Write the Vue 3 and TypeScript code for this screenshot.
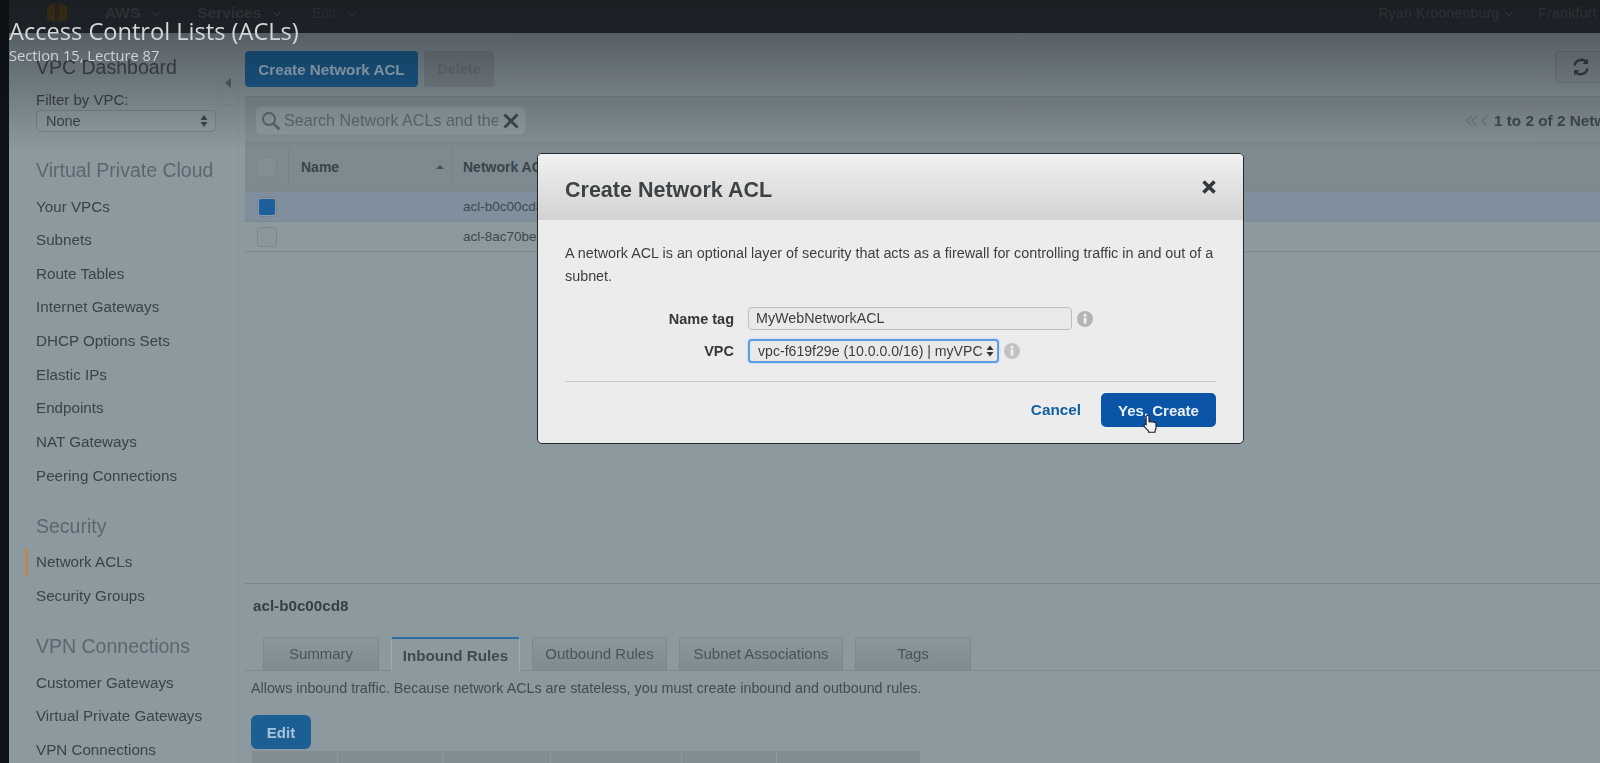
<script setup lang="ts">
const vpcItems: string[] = ['Your VPCs', 'Subnets', 'Route Tables', 'Internet Gateways', 'DHCP Options Sets', 'Elastic IPs', 'Endpoints', 'NAT Gateways', 'Peering Connections']
const vpnItems: string[] = ['Customer Gateways', 'Virtual Private Gateways', 'VPN Connections']
const tabs = [
  { label: 'Summary', width: 116, active: false },
  { label: 'Inbound Rules', width: 129, active: true },
  { label: 'Outbound Rules', width: 135, active: false },
  { label: 'Subnet Associations', width: 164, active: false },
  { label: 'Tags', width: 116, active: false },
]
const ruleCols: number[] = [85, 104, 107, 130, 94, 143]
</script>

<template>
  <div class="stage">
    <div class="strip"></div>
    <div class="page">
      <header class="topbar">
        <svg class="logo" width="22" height="21" viewBox="0 0 22 21"><path d="M1 4l8-3v19l-8-3zM21 4l-8-3v19l8-3z" fill="#5e4115"/><path d="M10 1h2v19h-2z" fill="#4a3412"/></svg>
        <span class="top-item aws">AWS<i class="caret"></i></span>
        <span class="top-item services">Services<i class="caret"></i></span>
        <span class="top-item edit">Edit<i class="caret"></i></span>
        <span class="top-user">Ryan Kroonenburg<i class="caret"></i></span>
        <span class="top-region">Frankfurt</span>
      </header>

      <div class="body">
        <aside class="sidebar">
          <div class="dash">VPC Dashboard</div>
          <div class="filter">Filter by VPC:</div>
          <div class="side-select">
            <span>None</span>
            <svg width="8" height="14" viewBox="0 0 8 14"><path d="M4 1l3.500 5h-7zM4 13l3.500-5h-7z" fill="#3d464b"/></svg>
          </div>
          <div class="group first">Virtual Private Cloud</div>
          <div v-for="item in vpcItems" :key="item" class="nav">{{ item }}</div>
          <div class="group">Security</div>
          <div class="nav active">Network ACLs</div>
          <div class="nav">Security Groups</div>
          <div class="group">VPN Connections</div>
          <div v-for="item in vpnItems" :key="item" class="nav">{{ item }}</div>
          <div class="collapse"><i></i></div>
        </aside>

        <main class="main">
          <div class="toolbar">
            <button class="btn primary">Create Network ACL</button>
            <button class="btn ghost">Delete</button>
            <div class="refresh">
              <svg width="20" height="20" viewBox="0 0 20 20" fill="none" stroke="#394247" stroke-width="2.4"><path d="M3.500 8.500A7 7 0 0 1 15.500 5"/><path d="M16.500 11.500A7 7 0 0 1 4.500 15"/><path d="M17 1.500v5.500h-5.500z" fill="#394247" stroke="none"/><path d="M3 18.500v-5.500h5.500z" fill="#394247" stroke="none"/></svg>
            </div>
          </div>

          <div class="searchbar">
            <div class="search">
              <svg width="20" height="20" viewBox="0 0 20 20" fill="none" stroke="#5d686e" stroke-width="2"><circle cx="8" cy="8" r="6"/><path d="M12.500 12.500l6 6" stroke-width="3"/></svg>
              <span class="search-text">Search Network ACLs and their associated subnets</span>
              <svg class="clear" width="16" height="16" viewBox="0 0 16 16" stroke="#3f484d" stroke-width="3"><path d="M1.500 1.500l13 13M14.500 1.500l-13 13"/></svg>
            </div>
            <div class="pager">
              <svg class="pager-arrows" width="24" height="14" viewBox="0 0 24 14" fill="none" stroke="#6f7a80" stroke-width="1.300"><path d="M6 2L1 7l5 5M11 2L6 7l5 5M21 2l-5 5 5 5"/></svg>
              <span>1 to 2 of 2 Network ACLs</span>
            </div>
          </div>

          <div class="thead">
            <div class="cell-check"><span class="check head"></span></div>
            <div class="cell-name">Name<i class="sort"></i></div>
            <div class="cell-id">Network ACL ID</div>
          </div>
          <div class="trow selected">
            <div class="cell-check"><span class="check on"></span></div>
            <div class="cell-name"></div>
            <div class="cell-id plain">acl-b0c00cd8</div>
          </div>
          <div class="trow">
            <div class="cell-check"><span class="check"></span></div>
            <div class="cell-name"></div>
            <div class="cell-id plain">acl-8ac70be3</div>
          </div>

          <div class="spacer"></div>

          <section class="detail">
            <div class="detail-id">acl-b0c00cd8</div>
            <div class="tabs">
              <div
                v-for="tab in tabs"
                :key="tab.label"
                class="tab"
                :class="{ on: tab.active }"
                :style="{ width: tab.width + 'px' }"
              >{{ tab.label }}</div>
            </div>
            <p class="note">Allows inbound traffic. Because network ACLs are stateless, you must create inbound and outbound rules.</p>
            <button class="btn primary edit-btn">Edit</button>
            <div class="rules">
              <span v-for="(w, i) in ruleCols" :key="i" :style="{ width: w + 'px' }"></span>
            </div>
          </section>
        </main>
      </div>
    </div>

    <div class="scrim"></div>
    <div class="player">
      <div class="player-title">Access Control Lists (ACLs)</div>
      <div class="player-sub">Section 15, Lecture 87</div>
    </div>

    <div class="modal">
      <div class="modal-head">
        <h2>Create Network ACL</h2>
        <svg width="14" height="14" viewBox="0 0 14 14" stroke="#33383c" stroke-width="3.600"><path d="M1.500 1.500l11 11M12.500 1.500l-11 11"/></svg>
      </div>
      <div class="modal-body">
        <p class="intro">A network ACL is an optional layer of security that acts as a firewall for controlling traffic in and out of a subnet.</p>
        <div class="form-row one">
          <label>Name tag</label>
          <div class="field">MyWebNetworkACL</div>
          <svg class="info" width="16" height="16" viewBox="0 0 16 16"><circle cx="8" cy="8" r="8" fill="#b4b4b4"/><rect x="6.800" y="6.600" width="2.600" height="6" fill="#f2f2f2"/><circle cx="8" cy="4.200" r="1.500" fill="#f2f2f2"/></svg>
        </div>
        <div class="form-row two">
          <label>VPC</label>
          <div class="field focus">
            <span>vpc-f619f29e (10.0.0.0/16) | myVPC</span>
            <svg width="8" height="12" viewBox="0 0 8 12"><path d="M4 .5l3.500 4.500h-7zM4 11.500l3.500-4.500h-7z" fill="#333"/></svg>
          </div>
          <svg class="info" width="16" height="16" viewBox="0 0 16 16"><circle cx="8" cy="8" r="8" fill="#c2c2c2"/><rect x="6.800" y="6.600" width="2.600" height="6" fill="#f2f2f2"/><circle cx="8" cy="4.200" r="1.500" fill="#f2f2f2"/></svg>
        </div>
        <div class="modal-foot">
          <span class="cancel">Cancel</span>
          <button class="yes">Yes, Create</button>
        </div>
      </div>
    </div>

    <svg class="hand" width="15" height="20" viewBox="0 0 15 20"><path d="M4.500 1.200c1 0 1.500.7 1.500 1.600v5l1 .1c.3-.6 1.700-.7 2.100.1.400-.5 1.700-.4 2 .4.600-.3 1.900 0 1.900 1.100v4.200c0 1.500-.5 2.300-1 3.100v1.400H5.500v-1.200C4.500 16 1 12.800 1 11.200c0-1 1.200-1.400 2.100-.7V2.800c0-.9.500-1.600 1.400-1.600z" fill="#f2f2f2" stroke="#1e1e1e" stroke-width="1.100"/></svg>
  </div>
</template>

<style>
html, body { margin: 0; background: #0f1317; }
</style>

<style scoped>
.stage {
  position: relative;
  width: 1600px;
  height: 763px;
  overflow: hidden;
  display: flex;
  background: #0f1317;
  font-family: "Liberation Sans", Arial, sans-serif;
}
.strip { width: 9px; flex: none; background: #0f1317; }
.page { flex: 1; min-width: 0; display: flex; flex-direction: column; filter: blur(0.5px); }

.topbar {
  height: 33px;
  flex: none;
  background: #2a3036;
  display: flex;
  align-items: flex-start;
  color: #4b5157;
  font-size: 15px;
  white-space: nowrap;
}
.logo { margin: 2px 0 0 37px; }
.top-item { font-weight: 700; line-height: 26px; font-size: 15.500px; }
.aws { margin-left: 37px; }
.services { margin-left: 38px; }
.edit { margin-left: 32px; font-weight: 400; font-size: 14px; color: #41474d; }
.top-user { margin-left: auto; line-height: 26px; font-size: 14px; letter-spacing: .2px; }
.top-user .caret { margin-left: 7px; }
.top-region { margin-left: 26px; margin-right: 3px; line-height: 26px; font-size: 14px; letter-spacing: .3px; }
.caret {
  display: inline-block;
  width: 5px;
  height: 5px;
  border-right: 1.500px solid currentColor;
  border-bottom: 1.500px solid currentColor;
  transform: rotate(45deg);
  margin: 0 0 3px 13px;
}

.body { flex: 1; min-height: 0; display: flex; background: #8c999f; }

.sidebar {
  position: relative;
  width: 229px;
  flex: none;
  box-sizing: border-box;
  padding: 20px 0 0 27px;
  color: #39434a;
  white-space: nowrap;
}
.dash { height: 28px; line-height: 28px; font-size: 19.500px; color: #414b52; }
.filter { margin-top: 10px; height: 18px; line-height: 18px; font-size: 15px; }
.side-select {
  margin-top: 1px;
  width: 180px;
  height: 22px;
  box-sizing: border-box;
  border: 1px solid #79858b;
  border-radius: 5px;
  background: #8f9ca2;
  display: flex;
  align-items: center;
  justify-content: space-between;
  padding: 0 7px 0 9px;
  font-size: 14.500px;
}
.group {
  margin-top: 19.500px;
  margin-bottom: 5.500px;
  height: 28px;
  line-height: 28px;
  font-size: 19.500px;
  color: #5b676e;
}
.group.first { margin-top: 24px; }
.nav { position: relative; height: 33.670px; line-height: 33.670px; font-size: 15.200px; }
.nav.active::before {
  content: "";
  position: absolute;
  left: -11px;
  top: 3px;
  width: 3px;
  height: 28px;
  background: #b88a4d;
}
.collapse {
  position: absolute;
  top: 27px;
  right: 0;
  width: 21px;
  height: 45px;
  box-sizing: border-box;
  border-left: 1px solid #87949a;
  border-top: 1px solid #85929a;
  border-bottom: 1px solid #85929a;
  display: flex;
  align-items: center;
  justify-content: center;
}
.collapse i {
  width: 0;
  height: 0;
  border-top: 5px solid transparent;
  border-bottom: 5px solid transparent;
  border-right: 6px solid #5a656b;
}

.main {
  flex: 1;
  min-width: 0;
  display: flex;
  flex-direction: column;
  border-left: 1px solid #87949a;
  padding-left: 6px;
}
.toolbar {
  height: 64px;
  flex: none;
  box-sizing: border-box;
  padding-top: 18px;
  display: flex;
  align-items: flex-start;
  gap: 6px;
  border-bottom: 1px solid #7a868c;
}
.btn {
  font-family: inherit;
  font-weight: 700;
  font-size: 15.200px;
  border: 0;
  padding: 0;
  border-radius: 4px;
  height: 36px;
}
.primary { width: 173px; background: #1b5f94; color: #a9c2d6; }
.ghost { width: 70px; background: #7f8a90; color: #6f7a80; font-size: 14.500px; }
.refresh {
  margin-left: auto;
  width: 60px;
  height: 32px;
  margin-right: -15px;
  box-sizing: border-box;
  border: 1px solid #79848a;
  border-radius: 4px;
  background: #88939a;
  display: flex;
  align-items: center;
  padding-left: 15px;
}

.searchbar {
  height: 46px;
  flex: none;
  box-sizing: border-box;
  border-bottom: 1px solid #79858b;
  background: #838f95;
  display: flex;
  align-items: flex-start;
  padding: 9px 0 0 10px;
  white-space: nowrap;
}
.search {
  width: 271px;
  height: 29px;
  box-sizing: border-box;
  border-radius: 6px;
  background: #8f9ca2;
  border: 1px solid #86929a;
  display: flex;
  align-items: center;
  padding-left: 5px;
  gap: 3px;
}
.search-text {
  width: 214px;
  flex: none;
  overflow: hidden;
  font-size: 16.100px;
  color: #5f6a70;
}
.clear { margin-left: 2px; }
.pager {
  margin-left: auto;
  width: 134px;
  overflow: hidden;
  flex: none;
  font-weight: 700;
  font-size: 15.300px;
  line-height: 30px;
  color: #3f494f;
  display: flex;
  align-items: center;
  gap: 4px;
}
.pager-arrows { flex: none; }

.thead, .trow { display: flex; flex: none; border-bottom: 1px solid #7b878d; white-space: nowrap; }
.thead { height: 49px; background: #7e8a90; box-sizing: border-box; align-items: center; color: #3a444a; font-size: 14px; font-weight: 700; }
.trow { height: 30px; box-sizing: border-box; align-items: center; font-size: 13.500px; color: #3e484e; background: #8c999d; }
.trow.selected { background: #808f9e; }
.cell-check { width: 44px; height: 100%; display: flex; align-items: center; padding-left: 12px; box-sizing: border-box; }
.thead .cell-check { border-right: 1px solid #768288; height: 38px; }
.cell-name { width: 163px; box-sizing: border-box; padding-left: 12px; display: flex; align-items: center; justify-content: space-between; padding-right: 7px; }
.thead .cell-name { height: 38px; border-right: 1px solid #768288; }
.cell-id { padding-left: 11px; }
.plain { font-weight: 400; }
.sort {
  width: 0;
  height: 0;
  border-left: 4px solid transparent;
  border-right: 4px solid transparent;
  border-bottom: 4px solid #465056;
}
.check { width: 20px; height: 20px; box-sizing: border-box; display: block; border: 1px solid #7b878d; border-radius: 4px; background: #8b979d; }
.check.head { background: #828e94; }
.check.on { background: #1c5f9a; border: 2px solid #8c9aa8; outline: 1px solid #76838f; outline-offset: -1px; }

.spacer { flex: 1; }

.detail {
  flex: none;
  height: 180px;
  box-sizing: border-box;
  border-top: 1px solid #7a868c;
  display: flex;
  flex-direction: column;
  white-space: nowrap;
  overflow: hidden;
}
.detail-id { margin: 12px 0 0 8px; height: 20px; line-height: 20px; font-size: 15.200px; font-weight: 700; color: #363f45; }
.tabs {
  margin-top: 21px;
  height: 34px;
  flex: none;
  box-sizing: border-box;
  padding-left: 18px;
  display: flex;
  gap: 12px;
  border-bottom: 1px solid #7d8a90;
}
.tab {
  box-sizing: border-box;
  height: 33px;
  text-align: center;
  line-height: 31px;
  font-size: 15px;
  color: #48535a;
  background: linear-gradient(#8b979d, #7f8b91);
  border: 1px solid #7c888e;
  border-bottom: 0;
  border-radius: 3px 3px 0 0;
}
.tab.on {
  height: 34px;
  background: #8c999f;
  border-top: 2px solid #2a6ea5;
  border-color: #2a6ea5 #a0adb3 #8c999f;
  font-weight: 700;
  line-height: 33px;
  font-size: 15.200px;
  color: #3f494f;
}
.note { margin: 8px 0 0 6px; height: 18px; line-height: 18px; font-size: 14.300px; color: #414b52; }
.edit-btn { margin: 18px 0 0 6px; width: 60px; height: 34px; flex: none; border-radius: 6px; font-size: 15px; }
.rules { margin: 2px 0 0 7px; display: flex; gap: 1px; height: 14px; flex: none; }
.rules span { background: #818d93; height: 14px; }

.scrim {
  position: absolute;
  left: 0;
  right: 0;
  top: 0;
  height: 150px;
  background: linear-gradient(rgba(12, 16, 20, .52), rgba(12, 16, 20, .42) 22%, rgba(12, 16, 20, 0));
}
.player { position: absolute; left: 9px; top: 15px; color: #d4d8da; font-family: "Open Sans", sans-serif; white-space: nowrap; }
.player-title { font-size: 23.600px; line-height: 32px; }
.player-sub { font-size: 14.700px; line-height: 17px; color: #cfd3d5; }

.modal {
  position: absolute;
  left: 537px;
  top: 153px;
  width: 707px;
  height: 291px;
  box-sizing: border-box;
  border: 1.500px solid #26292c;
  border-radius: 5px;
  background: #ececec;
  overflow: hidden;
  filter: blur(0.3px);
}
.modal-head {
  height: 66px;
  box-sizing: border-box;
  background: linear-gradient(#f1f1f1, #d2d2d2);
  display: flex;
  align-items: center;
  justify-content: space-between;
  padding: 0 27px 0 27px;
}
.modal-head h2 { margin: 6px 0 0; font-size: 21.500px; font-weight: 700; color: #3d4245; }
.modal-body { padding: 22px 27px 0; color: #3a3f42; }
.intro { margin: 0; font-size: 14.350px; line-height: 23px; }
.form-row { display: flex; align-items: center; }
.form-row.one { margin-top: 19px; }
.form-row.two { margin-top: 9px; }
.form-row label { width: 169px; text-align: right; font-weight: 700; font-size: 14.500px; color: #33383b; }
.field {
  margin-left: 14px;
  width: 324px;
  height: 23px;
  box-sizing: border-box;
  border: 1px solid #bdbdbd;
  border-radius: 4px;
  background: #e9e9e9;
  padding-left: 7px;
  line-height: 21px;
  font-size: 14.300px;
  color: #3a3e41;
}
.field.focus {
  width: 251px;
  height: 24px;
  border: 2px solid #5c9ce6;
  box-shadow: 0 0 2px #8bbcf0;
  display: flex;
  align-items: center;
  justify-content: space-between;
  padding: 0 3px 0 8px;
  font-size: 14.100px;
  white-space: nowrap;
}
.info { margin-left: 5px; }
.modal-foot {
  margin-top: 18px;
  border-top: 1.500px solid #c6c6c6;
  padding-top: 11px;
  display: flex;
  align-items: center;
  justify-content: flex-end;
  gap: 20px;
}
.cancel { font-weight: 700; font-size: 15.300px; color: #14609f; }
.yes {
  width: 115px;
  height: 34px;
  border: 0;
  border-radius: 5px;
  background: #0b55a8;
  color: #e8eff6;
  font-family: inherit;
  font-weight: 700;
  font-size: 15px;
  padding: 0;
}
.hand { position: absolute; left: 1143px; top: 414px; }
</style>
